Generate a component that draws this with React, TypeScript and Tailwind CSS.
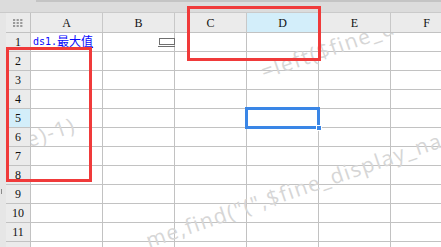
import React from "react";

const cols = ["A", "B", "C", "D", "E", "F"];
const rows = [1, 2, 3, 4, 5, 6, 7, 8, 9, 10, 11, 12];

function GridIcon() {
  return (
    <svg width="10" height="8" viewBox="0 0 10 8" className="block">
      {[0, 1, 2].map((r) =>
        [0, 1, 2].map((c) => (
          <rect key={`${r}-${c}`} x={c * 3.6} y={r * 3} width="2.2" height="2" fill="#9a9a9a" />
        ))
      )}
    </svg>
  );
}

function Watermark({ x, y, text, align }: { x: number; y: number; text: string; align: "left" | "right" }) {
  return (
    <div className="absolute w-0 h-0 origin-top-left rotate-[-19deg]" style={{ left: x, top: y }}>
      <span
        className={
          "absolute bottom-[-5px] whitespace-nowrap text-[21px] tracking-[1.5px] text-[#d6d6d6] font-['Open_Sans',sans-serif] " +
          (align === "left" ? "left-0" : "right-0")
        }
      >
        {text}
      </span>
    </div>
  );
}

export default function App() {
  return (
    <div className="relative w-[441px] h-[247px] overflow-hidden bg-white font-['Liberation_Serif',serif] text-[12px] text-[#111]">
      {/* top strip */}
      <div className="relative h-[13px] bg-[#dcdcdc] border-b border-[#cacaca]">
        <div className="absolute left-[36px] right-0 top-0 h-[2px] bg-[#c4c4c4]" />
      </div>
      <div className="flex">
        <div className="relative w-[6px] shrink-0 bg-[#e6e6e6]">
          <div className="absolute left-[1px] top-[176px] w-px h-[5px] bg-[#8a8a8a]" />
        </div>
        <div className="flex-1">
          {/* header row */}
          <div className="flex h-[20px] bg-[#ebebeb] border-b border-[#c2c2c2]">
            <div className="w-[25px] shrink-0 border-r border-[#c2c2c2] flex items-center justify-center">
              <GridIcon />
            </div>
            {cols.map((c) => (
              <div
                key={c}
                className={
                  "w-[72px] shrink-0 border-r border-[#c8c8c8] flex items-center justify-center leading-none " +
                  (c === "D" ? "bg-[#d3eefa]" : "")
                }
              >
                {c}
              </div>
            ))}
          </div>
          {rows.map((r) => (
            <div key={r} className="flex h-[19px] border-b border-[#c2c2c2]">
              <div
                className={
                  "w-[25px] shrink-0 border-r border-[#c2c2c2] flex items-center justify-center leading-none " +
                  (r === 5 ? "bg-[#d3eefa]" : "bg-[#ebebeb]")
                }
              >
                {r}
              </div>
              {cols.map((c) => (
                <div key={c} className="relative w-[72px] shrink-0 border-r border-[#c2c2c2]">
                  {r === 1 && c === "A" && (
                    <div className="absolute left-[2px] top-[2px] flex items-end text-[#0a0aff] leading-none">
                      <span className="font-['DejaVu_Sans_Mono',monospace] text-[10px] tracking-[0px]">ds1.</span>
                      <span className="font-['Noto_Sans_CJK_SC',sans-serif] text-[12px] underline underline-offset-[1px] decoration-[#0a0aff]">
                        最大值
                      </span>
                    </div>
                  )}
                  {r === 1 && c === "B" && (
                    <div className="absolute left-[55px] top-[5px] flex flex-col items-center gap-[1px]">
                      <div className="w-[16px] h-[7px] border border-[#6f6f6f]" />
                      <div className="w-[17px] h-px bg-[#6f6f6f]" />
                    </div>
                  )}
                </div>
              ))}
            </div>
          ))}
        </div>
      </div>

      {/* watermark over cell area */}
      <div className="pointer-events-none absolute left-[31px] top-[33px] right-0 bottom-0 overflow-hidden">
        <Watermark x={78 - 31} y={134 - 33} text="$fine_display_name)-1)" align="right" />
        <Watermark x={265 - 31} y={82 - 33} text={'=left($fine_display_name,find("(",$fine_display_name)-1)'} align="left" />
        <Watermark x={150 - 31} y={251 - 33} text={'me,find("(",$fine_display_name)-1)'} align="left" />
      </div>

      {/* selection */}
      <div className="pointer-events-none absolute left-[245px] top-[107px] w-[75px] h-[22px] border-[3px] border-[#3a86e6]" />
      <div className="pointer-events-none absolute left-[316px] top-[125px] w-[6px] h-[6px] bg-[#3a86e6] border border-white" />

      {/* red annotations */}
      <div className="pointer-events-none absolute left-[6px] top-[47px] w-[86px] h-[135px] border-[3px] border-[#f03a3a]" />
      <div className="pointer-events-none absolute left-[187px] top-[6px] w-[134px] h-[55px] border-[3px] border-[#f03a3a]" />
    </div>
  );
}
